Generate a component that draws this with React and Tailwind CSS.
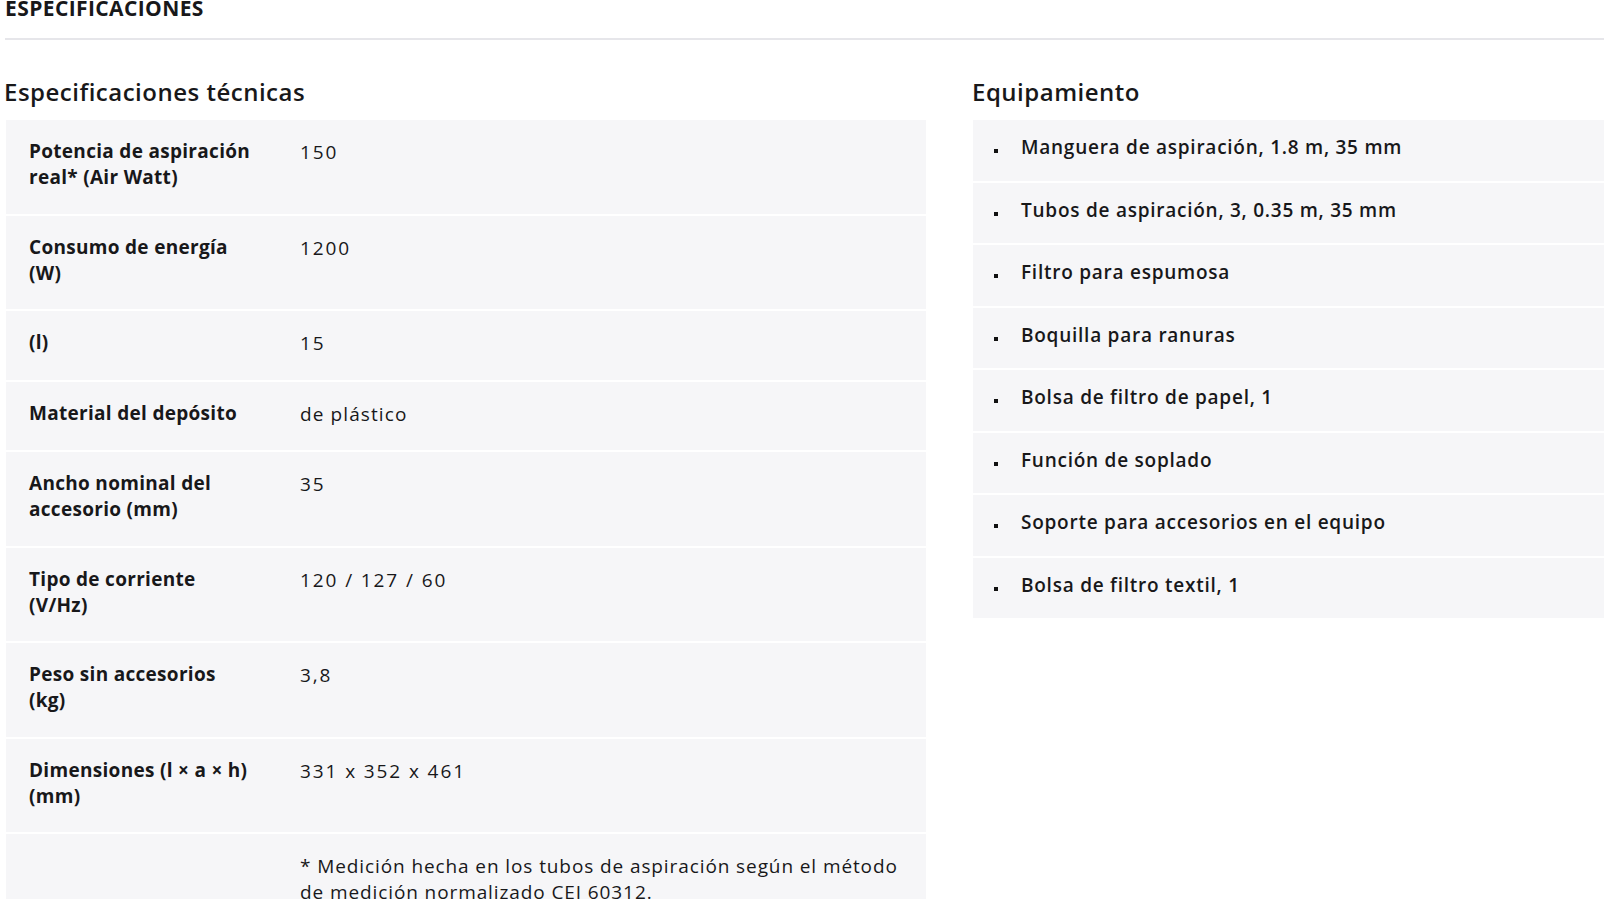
import React from 'react';

const specs = [
  { label: ['Potencia de aspiración', 'real* (Air Watt)'], value: '150' },
  { label: ['Consumo de energía', '(W)'], value: '1200' },
  { label: ['(l)'], value: '15' },
  { label: ['Material del depósito'], value: 'de plástico' },
  { label: ['Ancho nominal del', 'accesorio (mm)'], value: '35' },
  { label: ['Tipo de corriente', '(V/Hz)'], value: '120 / 127 / 60' },
  { label: ['Peso sin accesorios', '(kg)'], value: '3,8' },
  { label: ['Dimensiones (l × a × h)', '(mm)'], value: '331 x 352 x 461' },
];

const equipment = [
  'Manguera de aspiración, 1.8 m, 35 mm',
  'Tubos de aspiración, 3, 0.35 m, 35 mm',
  'Filtro para espumosa',
  'Boquilla para ranuras',
  'Bolsa de filtro de papel, 1',
  'Función de soplado',
  'Soporte para accesorios en el equipo',
  'Bolsa de filtro textil, 1',
];

// numbers in the original font run wider than letters
const valueTracking = (v) => (/^\d/.test(v) ? 'tracking-[1.9px]' : 'tracking-[1.1px]');

const SpecRow = ({ label, value }) => (
  <div className="flex bg-[#f6f6f8] pl-[23px] pt-[18px] pb-[23.5px] leading-[26px]">
    <div className="w-[250px] shrink-0 text-[19px] font-bold tracking-[0.3px]">
      {label.map((line) => (
        <span key={line} className="block whitespace-nowrap">
          {line}
        </span>
      ))}
    </div>
    <div className={`ml-[21px] mt-[1px] text-[19px] ${valueTracking(value)}`}>{value}</div>
  </div>
);

const App = () => (
  <div className="w-[1604px] h-[899px] overflow-hidden bg-white text-[#18181a] font-['Open_Sans',sans-serif]">
    <div className="pl-[5px]">
      <h1 className="-mt-[2px] text-[21px] leading-[21px] font-bold tracking-[0.4px]">ESPECIFICACIONES</h1>
      <div className="mt-[19px] h-[2px] bg-[#e6e6ea]" />
    </div>

    <div className="flex gap-[47px] pl-[6px] mt-[38px]">
      <section className="w-[920px] shrink-0">
        <h2 className="-ml-[2px] text-[24px] leading-[28px] font-semibold tracking-[0.5px]">Especificaciones técnicas</h2>
        <div className="mt-[14px] flex flex-col gap-[2px]">
          {specs.map((s) => (
            <SpecRow key={s.value} label={s.label} value={s.value} />
          ))}
          <div className="flex bg-[#f6f6f8] pl-[23px] pt-[18px] pb-[23.5px] leading-[26px]">
            <div className="w-[250px] shrink-0" />
            <p className="ml-[21px] mt-[1px] text-[19px] tracking-[0.9px]">
              * Medición hecha en los tubos de aspiración según el método
              <br />
              de medición normalizado CEI 60312.
            </p>
          </div>
        </div>
      </section>

      <section className="flex-1">
        <h2 className="-ml-[1px] text-[24px] leading-[28px] font-semibold tracking-[0.5px]">Equipamiento</h2>
        <ul className="mt-[14px] flex flex-col gap-[2px]">
          {equipment.map((item) => (
            <li key={item} className="flex h-[60.5px] bg-[#f6f6f8] pl-[21px] pt-[14px]">
              <span className="mt-[15px] h-[4px] w-[4px] shrink-0 bg-[#111]" />
              <span className="ml-[23px] text-[19px] leading-[26px] font-semibold tracking-[0.75px]">{item}</span>
            </li>
          ))}
        </ul>
      </section>
    </div>
  </div>
);

export default App;
